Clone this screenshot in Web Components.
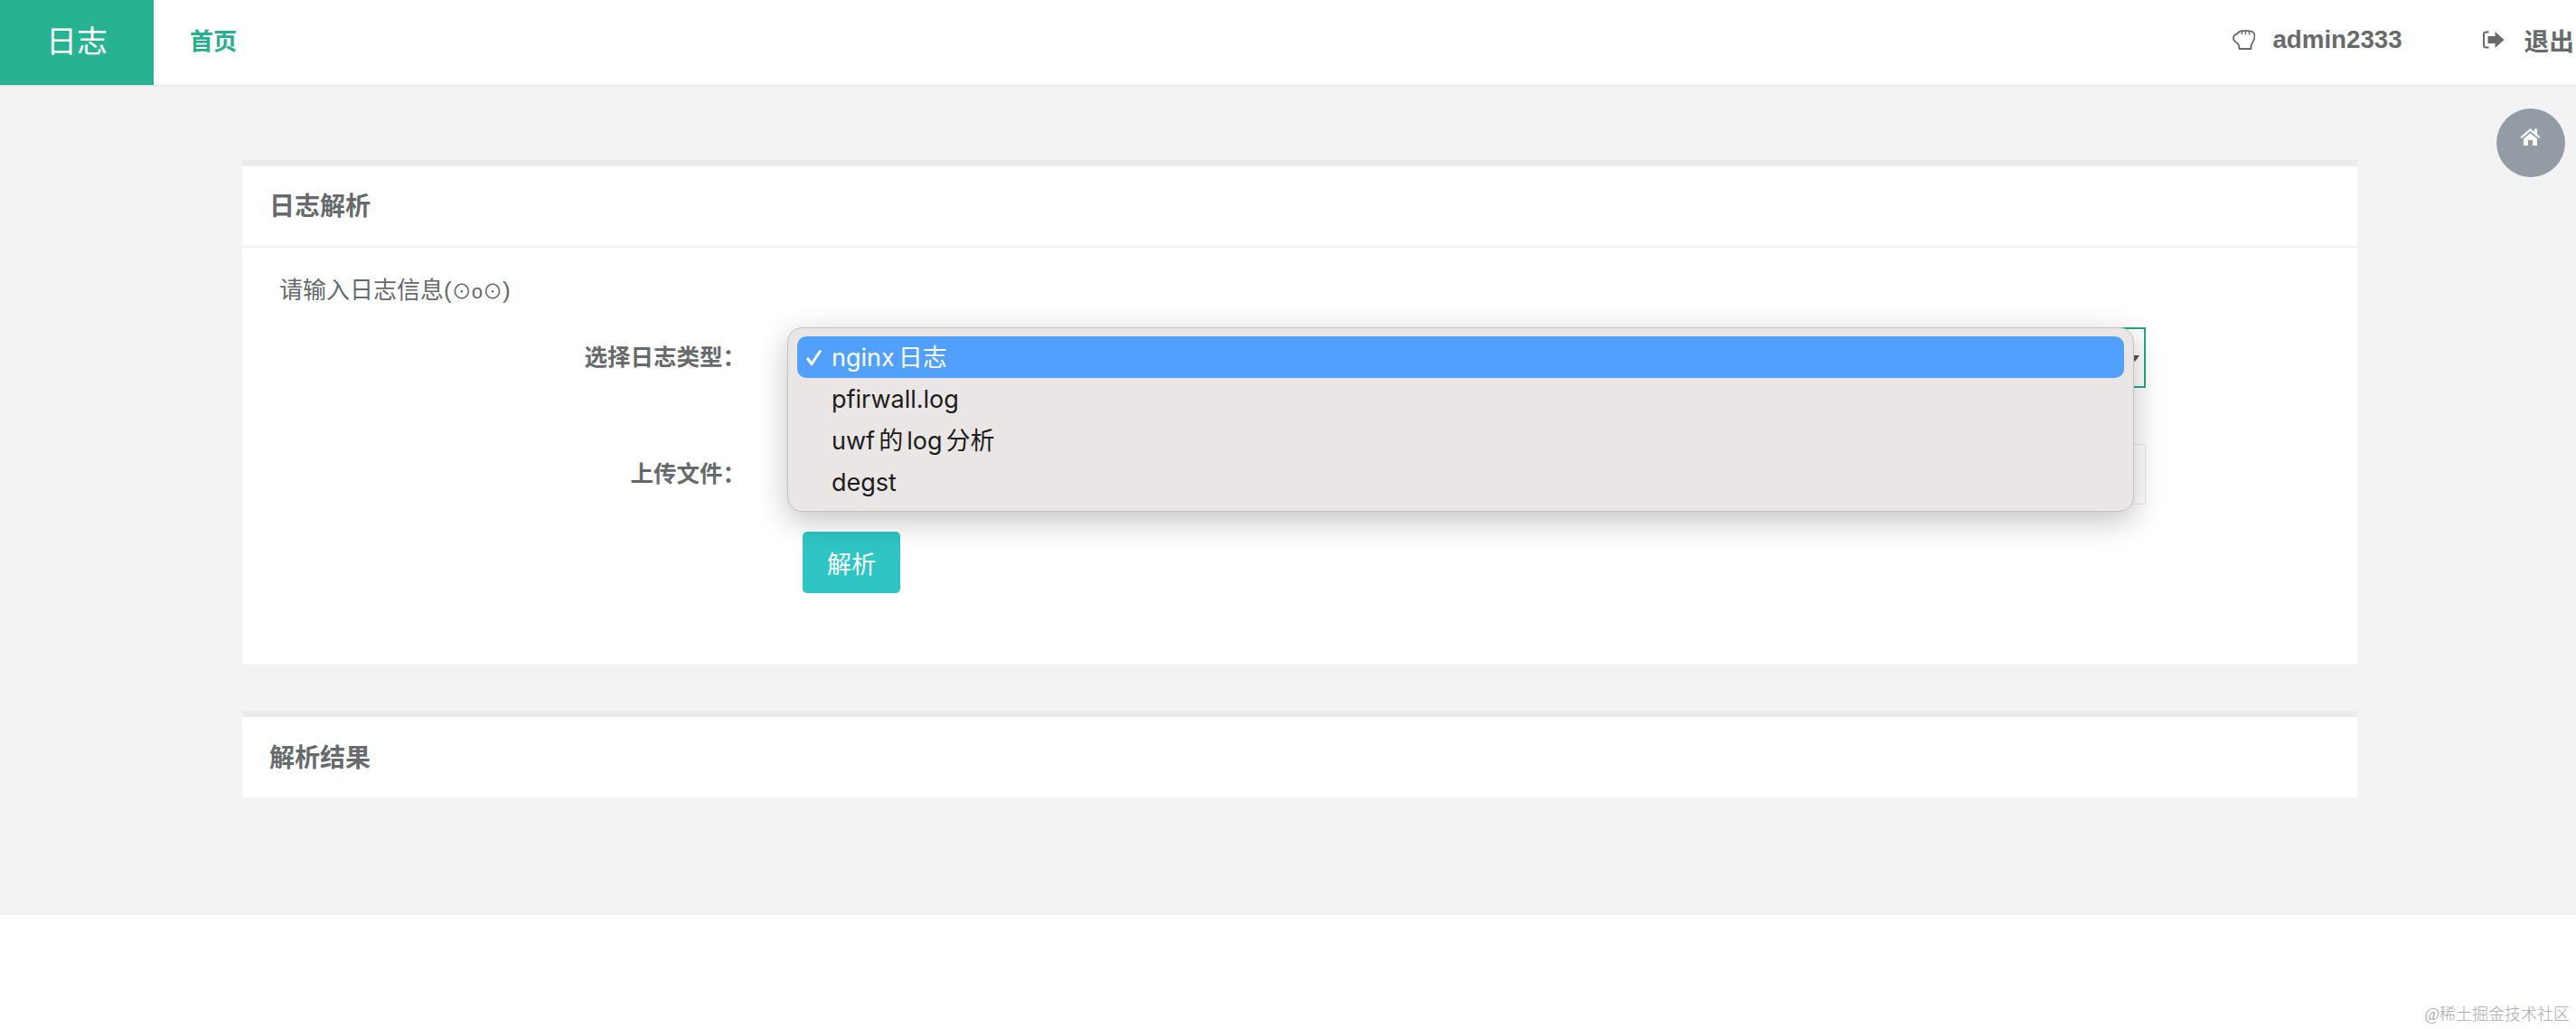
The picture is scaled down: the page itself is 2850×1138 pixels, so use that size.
<!DOCTYPE html>
<html lang="zh-CN">
<head>
<meta charset="utf-8">
<title>日志解析</title>
<style>
    html, body { margin: 0; padding: 0; background: #fff; }
    body {
        height: 1138px;
        overflow: hidden;
        font-family: "Liberation Sans", "Noto Sans CJK SC", sans-serif;
        color: #676a6c;
    }
</style>
</head>
<body>
<top-bar brand="日志" user="admin2333"></top-bar>
<main-area>
    <log-card title="日志解析">
        <log-form></log-form>
    </log-card>
    <log-card title="解析结果" empty></log-card>
</main-area>
<home-button></home-button>
<water-mark>@稀土掘金技术社区</water-mark>

<script>
const CJK = `"Liberation Sans", "Noto Sans CJK SC", sans-serif`;

class TopBar extends HTMLElement{
    constructor(){
        super();
        this.shadowDOM = this.attachShadow({mode:"open"});
    }
    connectedCallback(){
        this.shadowDOM.innerHTML = `
        <style>
        :host { display: flex; height: 94px; background: #fff; align-items: stretch;
                box-shadow: 0 1px 2px rgba(0,0,0,.08); position: relative; font-family: ${CJK}; }
        .brand { width: 170px; background: #27b391; color: #fff; font-size: 34px; display: flex;
                 align-items: center; justify-content: center; padding-bottom: 8px; box-sizing: border-box; }
        .home { margin-left: 40px; align-self: center; color: #27ae8e; font-size: 26px; font-weight: bold; padding-bottom: 7px; }
        .right { margin-left: auto; display: flex; align-items: center; padding-right: 2px; padding-bottom: 6px;
                 font-size: 27.7px; font-weight: bold; color: #676a6c; }
        .user svg { margin-right: 19px; }
        .user, .out { display: flex; align-items: center; }
        .out { margin-left: 88px; }
        .out svg { margin-right: 22px; }
        </style>
        <div class="brand">${this.getAttribute("brand")}</div>
        <div class="home">首页</div>
        <div class="right">
            <div class="user">
                <svg width="25" height="22" viewBox="0 0 25 22" fill="none" stroke="#676a6c" stroke-width="1.8" stroke-linejoin="round">
                    <path d="M7.500 21H20.500V17C22.500 14 24.500 11 24.500 7C24.500 3.500 22 1.500 19.500 1.500C16 0.800 12 0.800 9 1.500C7 2 6 3 5 4.500C2.500 5 1 7 1 9.500C1 12 4 14 6 15.500C7 16.500 7.500 18 7.500 21Z"/>
                    <path d="M10.500 1V5M14.500 1V5M18.500 1.500V5.500" stroke-width="1.400"/>
                </svg>
                <span>${this.getAttribute("user")}</span>
            </div>
            <div class="out">
                <svg width="25" height="20" viewBox="0 0 24 20">
                    <path d="M7 1.500H4C2.500 1.500 1.500 2.500 1.500 4V16C1.500 17.500 2.500 18.500 4 18.500H7" fill="none" stroke="#676a6c" stroke-width="2"/>
                    <path d="M6 6H14V1L24 10L14 19V14H6Z" fill="#676a6c"/>
                </svg>
                <span>退出</span>
            </div>
        </div>`;
    }
}
customElements.define("top-bar", TopBar);

class MainArea extends HTMLElement{
    constructor(){
        super();
        this.shadowDOM = this.attachShadow({mode:"open"});
    }
    connectedCallback(){
        this.shadowDOM.innerHTML = `
        <style>
        :host { display: flex; flex-direction: column; gap: 51px; box-sizing: border-box; height: 918px;
                padding: 83px 242px 0 268px; background: #f3f3f3; }
        </style>
        <slot></slot>`;
    }
}
customElements.define("main-area", MainArea);

class LogCard extends HTMLElement{
    constructor(){
        super();
        this.shadowDOM = this.attachShadow({mode:"open"});
    }
    connectedCallback(){
        const empty = this.hasAttribute("empty");
        this.shadowDOM.innerHTML = `
        <style>
        :host { display: block; background: #fff; border-top: 7px solid #e9ebec; }
        .head { height: ${empty ? 89 : 90}px; box-sizing: border-box; padding: 0 0 4px 30px; display: flex; align-items: center;
                font-size: 28px; font-weight: bold; color: #676a6c; ${empty ? "" : "border-bottom: 2px solid #f1f1f1;"} }
        </style>
        <div class="head">${this.getAttribute("title")}</div>
        <slot></slot>`;
    }
}
customElements.define("log-card", LogCard);

class LogForm extends HTMLElement{
    constructor(){
        super();
        this.shadowDOM = this.attachShadow({mode:"open"});
    }
    connectedCallback(){
        this.shadowDOM.innerHTML = `
        <style>
        :host { display: block; box-sizing: border-box; height: 461px; padding: 29px 234px 0 41px; }
        .intro { font-size: 26px; height: 36px; line-height: 36px; margin-bottom: 23px; color: #676a6c; }
        .intro span { font-size: 22px; }
        .grid { display: grid; grid-template-columns: 503px 1fr; grid-auto-rows: 67px; column-gap: 76px; row-gap: 62px; }
        label { font-size: 25.500px; font-weight: bold; text-align: right; height: 67px; line-height: 66px; margin-right: -13px; color: #676a6c; }
        .box { height: 67px; box-sizing: border-box; position: relative; }
        .select { border: 2px solid #1fa986; background: #fff; }
        .arrow { position: absolute; right: 5px; top: 29px; width: 0; height: 0;
                 border-left: 5px solid transparent; border-right: 5px solid transparent; border-top: 7px solid #555; }
        .file { border: 1px solid #e5e6e7; background: #fff; }
        button { grid-column: 2; justify-self: start; margin-top: -32px; width: 108px; height: 68px; border: 0; border-radius: 5px;
                 background: #2fc5c5; color: #fff; font-family: inherit; font-size: 27px; padding: 0; }
        </style>
        <div class="intro">请输入日志信息(<span>⊙o⊙</span>)</div>
        <div class="grid">
            <label>选择日志类型：</label>
            <div class="box select"><span class="arrow"></span><select-menu></select-menu></div>
            <label>上传文件：</label>
            <div class="box file"></div>
            <button>解析</button>
        </div>`;
    }
}
customElements.define("log-form", LogForm);

class SelectMenu extends HTMLElement{
    constructor(){
        super();
        this.shadowDOM = this.attachShadow({mode:"open"});
    }
    connectedCallback(){
        const options = ["nginx 日志", "pfirwall.log", "uwf 的 log 分析", "degst"];
        this.shadowDOM.innerHTML = `
        <style>
        :host { position: absolute; left: -19px; top: -2px; width: 1490px; height: 204px; box-sizing: border-box;
                padding: 9px 10px; background: #ebe6e6; border: 1px solid #c6c2c2; border-radius: 16px;
                box-shadow: 0 10px 34px rgba(0,0,0,.24); z-index: 2;
                font-family: Inter, "Noto Sans CJK SC", sans-serif; font-size: 27px; word-spacing: -3.500px; color: #1c1c1c; }
        .opt { height: 46px; line-height: 47px; padding-left: 38px; border-radius: 10px; position: relative; white-space: nowrap; }
        .opt.on { background: #51a0fd; color: #fff; }
        svg { position: absolute; left: 9px; top: 14px; }
        </style>
        ${options.map((o, i) => `<div class="opt${i === 0 ? " on" : ""}">${i === 0 ? `<svg width="19" height="19" viewBox="0 0 19 19" fill="none" stroke="#fff" stroke-width="3"><path d="M2 10L7 16.500L17 1.500"/></svg>` : ""}${o}</div>`).join("")}`;
    }
}
customElements.define("select-menu", SelectMenu);

class HomeButton extends HTMLElement{
    constructor(){
        super();
        this.shadowDOM = this.attachShadow({mode:"open"});
    }
    connectedCallback(){
        this.shadowDOM.innerHTML = `
        <style>
        :host { position: absolute; left: 2762px; top: 120px; width: 76px; height: 76px; border-radius: 50%;
                background: #939ca5; display: flex; align-items: center; justify-content: center; }
        svg { margin: 0 1px 15px 0; }
        </style>
        <svg width="23" height="20" viewBox="0 0 23 20" fill="#fff">
            <path d="M0.500 10.500L11.500 1L16 4.800V1.500H19V7.500L22.500 10.500L21 12L11.500 4L2 12Z"/>
            <path d="M4 12.500L11.500 6.200L19 12.500V20H14V14H9V20H4Z"/>
        </svg>`;
    }
}
customElements.define("home-button", HomeButton);

class WaterMark extends HTMLElement{
    constructor(){
        super();
        this.shadowDOM = this.attachShadow({mode:"open"});
    }
    connectedCallback(){
        this.shadowDOM.innerHTML = `
        <style>
        :host { position: absolute; right: 7px; top: 1110px; font-family: "Liberation Serif", "Noto Sans CJK SC", serif;
                font-size: 18px; line-height: 24px; font-weight: 300; color: #a9a9a9; }
        </style>
        <slot></slot>`;
    }
}
customElements.define("water-mark", WaterMark);
</script>
</body>
</html>
